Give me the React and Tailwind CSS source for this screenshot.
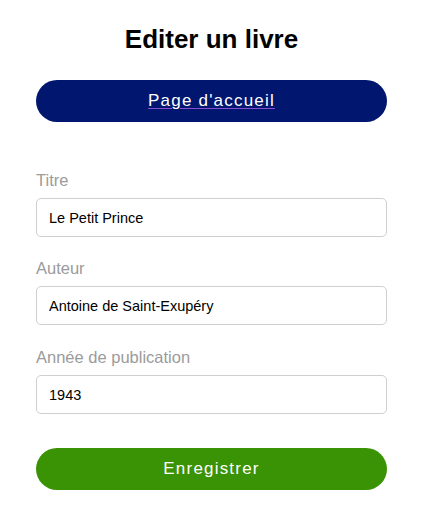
import React from "react";

const Field = ({ label, value, mt }) => (
  <div className={`flex flex-col ${mt}`}>
    <label className="text-[16.5px] leading-[20px] text-[#9b9b9b]">{label}</label>
    <input
      readOnly
      value={value}
      className="mt-[8px] h-[39px] rounded-[5px] border border-[#cfcfcf] bg-white px-[12px] text-[14.5px] text-black outline-none"
    />
  </div>
);

export default function App() {
  return (
    <div className="min-h-[515px] bg-white font-['Liberation_Sans',Arial,sans-serif]">
      <div className="ml-[36px] w-[351px] pt-[24px]">
        <h1 className="text-center text-[26px] font-bold leading-[30px] text-black">
          Editer un livre
        </h1>

        <a
          href="#"
          className="mt-[26px] flex h-[42px] items-center justify-center rounded-full bg-[#00166f] text-[17px] tracking-[1.2px] text-white underline decoration-[#8a4fd0] underline-offset-[2px]"
        >
          Page d'accueil
        </a>

        {/* form fields */}
        <div className="mt-[48px]">
          <Field label="Titre" value="Le Petit Prince" />
          <Field label="Auteur" value="Antoine de Saint-Exupéry" mt="mt-[21px]" />
          <Field label="Année de publication" value="1943" mt="mt-[22px]" />
        </div>

        <button className="mt-[34px] flex h-[42px] w-full items-center justify-center rounded-full bg-[#3a9205] text-[17px] tracking-[1.2px] text-white">
          Enregistrer
        </button>
      </div>
    </div>
  );
}
